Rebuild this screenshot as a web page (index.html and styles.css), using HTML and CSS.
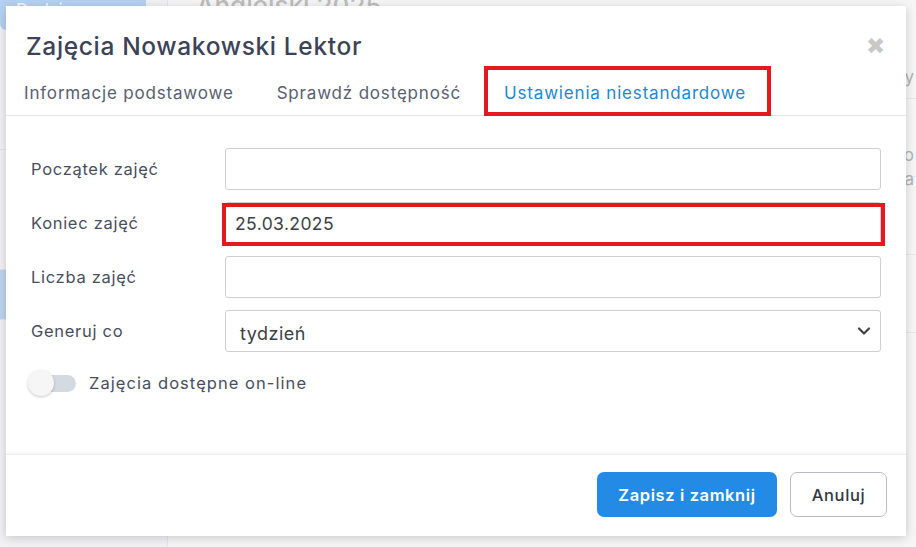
FILE: index.html
```html
<!DOCTYPE html>
<html lang="pl">
<head>
<meta charset="utf-8">
<title>Zajęcia Nowakowski Lektor</title>
<link rel="stylesheet" href="styles.css">
</head>
<body>
<div class="page">
  <aside class="sidebar">
    <div class="add-btn">Dodaj grupę</div>
    <div class="side-row"></div>
    <div class="side-row"></div>
    <div class="side-row active"></div>
  </aside>
  <main class="content">
    <h2 class="content-title">Angielski 2025</h2>
    <div class="content-row">y</div>
    <div class="content-row">o<br>a</div>
    <div class="content-row"></div>
    <div class="content-row"></div>
  </main>
</div>

<div class="backdrop"></div>

<div class="modal">
  <div class="modal-header">
    <h1 class="modal-title">Zajęcia Nowakowski Lektor</h1>
    <span class="close">&#10006;</span>
  </div>
  <nav class="tabs">
    <span class="tab">Informacje podstawowe</span>
    <span class="tab">Sprawdź dostępność</span>
    <span class="tab tab-active">Ustawienia niestandardowe</span>
  </nav>
  <div class="modal-body">
    <div class="row">
      <label class="label">Początek zajęć</label>
      <div class="field"><input class="input" type="text" value=""></div>
    </div>
    <div class="row">
      <label class="label">Koniec zajęć</label>
      <div class="field highlight"><input class="input" type="text" value="25.03.2025"></div>
    </div>
    <div class="row">
      <label class="label">Liczba zajęć</label>
      <div class="field"><input class="input" type="text" value=""></div>
    </div>
    <div class="row">
      <label class="label">Generuj co</label>
      <div class="field">
        <div class="select">
          <span>tydzień</span>
          <svg class="chev" width="14" height="10" viewBox="0 0 14 10"><path d="M2 2.5 L7 7.5 L12 2.5" fill="none" stroke="#444" stroke-width="2.2" stroke-linecap="round" stroke-linejoin="round"/></svg>
        </div>
      </div>
    </div>
    <div class="toggle-row">
      <span class="switch"><span class="knob"></span></span>
      <span class="toggle-label">Zajęcia dostępne on-line</span>
    </div>
  </div>
  <div class="modal-footer">
    <button class="btn btn-primary">Zapisz i zamknij</button>
    <button class="btn btn-default">Anuluj</button>
  </div>
</div>
</body>
</html>
```

FILE: styles.css
```css
* { box-sizing: border-box; }
html, body { margin: 0; padding: 0; }
body {
  width: 916px;
  height: 547px;
  overflow: hidden;
  font-family: Inter, "Open Sans", sans-serif;
  background: #fafafa;
  position: relative;
}

.page {
  display: flex;
  height: 547px;
}
.sidebar {
  width: 168px;
  background: #f4f4f6;
  border-right: 1px solid #e2e2e6;
  display: flex;
  flex-direction: column;
}
.add-btn {
  width: 146px;
  height: 30px;
  background: #9ec5f4;
  color: #fff;
  font-size: 17px;
  padding: 0 16px;
  line-height: 20px;
  border-radius: 0 0 6px 6px;
  overflow: hidden;
}
.side-row { height: 120px; border-bottom: 1px solid #e0e0e4; }
.side-row.active { background: #a9c9ec; height: 50px; }
.content {
  flex: 1;
  padding-left: 28px;
}
.content-title {
  margin: -10px 0 0;
  font-size: 26px;
  font-weight: 500;
  color: #aaa;
}
.content-row {
  height: 78px;
  border-bottom: 1px solid #e6e6ea;
  color: #999;
  font-size: 17px;
  text-align: right;
  padding-right: 2px;
  padding-top: 44px;
  line-height: 24px;
}

.backdrop {
  position: absolute;
  inset: 0;
  background: rgba(238, 239, 242, 0.3);
}

.modal {
  position: absolute;
  left: 6px;
  top: 6px;
  width: 900px;
  height: 530px;
  background: #fff;
  box-shadow: 0 2px 10px rgba(0,0,0,0.18);
  display: flex;
  flex-direction: column;
}

.modal-header {
  display: flex;
  align-items: center;
  justify-content: space-between;
  padding: 16px 21px 0 20px;
  height: 64px;
}
.modal-title {
  margin: 0;
  font-size: 24.5px;
  font-weight: 500;
  color: #3d4357;
  letter-spacing: 0.65px;
}
.close {
  color: #c8c8c8;
  font-size: 23px;
  line-height: 23px;
  margin-top: 0;
}

.tabs {
  display: flex;
  gap: 43px;
  padding-left: 18px;
  height: 46px;
  border-bottom: 1px solid #e4e4e6;
  align-items: stretch;
}
.tab {
  font-size: 17px;
  color: #59606f;
  position: relative;
  letter-spacing: 0.82px;
  display: flex;
  align-items: center;
}
.tab-active { color: #1c88d3; }
.tab-active::after {
  content: "";
  position: absolute;
  left: -20px;
  right: -25px;
  top: -4px;
  bottom: -1px;
  border: 4px solid #e3191f;
}

.modal-body {
  flex: 1;
  padding: 32px 25px 0 25px;
  display: flex;
  flex-direction: column;
  gap: 12px;
}
.row {
  display: flex;
  align-items: center;
  height: 42px;
}
.label {
  width: 194px;
  font-size: 16.5px;
  color: #484e5e;
  letter-spacing: 0.7px;
}
.field {
  flex: 1;
  height: 42px;
  position: relative;
}
.input {
  width: 100%;
  height: 42px;
  border: 1px solid #cfcfd2;
  border-radius: 3px;
  font-family: inherit;
  font-size: 17.5px;
  color: #3c3f48;
  padding: 0 9px;
  outline: none;
  background: #fff;
  letter-spacing: 0.4px;
}
.highlight::after {
  content: "";
  position: absolute;
  left: -3px;
  right: -4px;
  top: 1px;
  bottom: -2px;
  border: 4px solid #e3191f;
}
.select {
  height: 42px;
  border: 1px solid #cfcfd2;
  border-radius: 3px;
  display: flex;
  align-items: center;
  justify-content: space-between;
  padding: 0 9px 0 14px;
  font-size: 18px;
  color: #3c3f48;
  letter-spacing: 0.5px;
}
.select span { margin-top: 4px; }

.toggle-row {
  display: flex;
  align-items: center;
  gap: 13px;
  margin-top: 6px;
  margin-left: -3px;
}
.switch {
  width: 48px;
  height: 26px;
  position: relative;
  display: flex;
  align-items: center;
}
.switch::before {
  content: "";
  position: absolute;
  left: 8px;
  right: 0;
  height: 17px;
  border-radius: 9px;
  background: #d3dae2;
}
.knob {
  position: relative;
  width: 26px;
  height: 26px;
  border-radius: 50%;
  background: #f6f6f6;
  box-shadow: 0 1px 3px rgba(0,0,0,0.22);
}
.toggle-label {
  font-size: 16.5px;
  color: #484e5e;
  letter-spacing: 1.05px;
}

.modal-footer {
  height: 82px;
  border-top: 1px solid #ececee;
  box-shadow: 0 -2px 4px rgba(0,0,0,0.04);
  display: flex;
  justify-content: flex-end;
  align-items: flex-start;
  gap: 13px;
  padding: 17px 19px 0 0;
}
.btn {
  height: 45px;
  border-radius: 7px;
  font-family: inherit;
  font-size: 16.5px;
  cursor: pointer;
  letter-spacing: 0.6px;
}
.btn-primary {
  width: 180px;
  background: #238be5;
  color: #fff;
  border: none;
  font-weight: 600;
}
.btn-default {
  width: 97px;
  background: #fff;
  color: #33373f;
  border: 1px solid #b9bcc2;
  font-weight: 500;
}
```
